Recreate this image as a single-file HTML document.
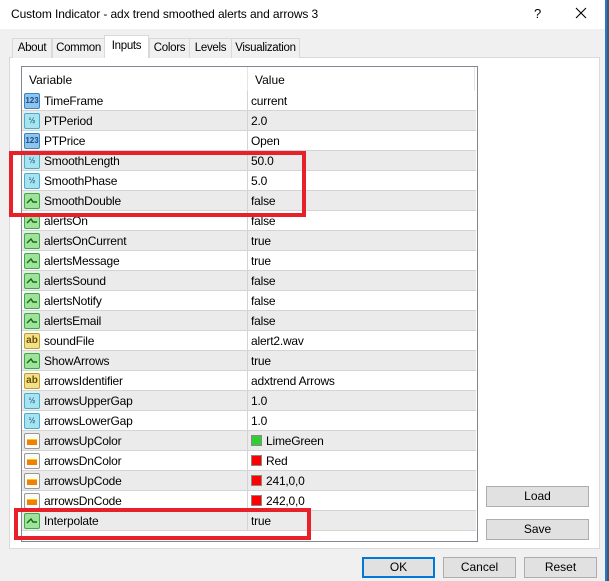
<!DOCTYPE html><html><head><style>
*{box-sizing:border-box;margin:0;padding:0}
body{width:609px;height:581px;overflow:hidden;background:#f0f0f0;font-family:"Liberation Sans",sans-serif;font-size:12px;color:#000;position:relative}
.a{position:absolute}
.title{left:0;top:0;width:606px;height:29px;background:#fff}
.tab{position:absolute;top:38px;height:20px;border:1px solid #d9d9d9;border-bottom:none;background:#f0f0f0;text-align:center;line-height:18px;font-size:11.5px;letter-spacing:-0.3px}
.row{position:absolute;left:22px;width:454px;height:20px;border-bottom:1px solid #d4d4d4}
.row.g{background:#ebebeb}
.row .n{position:absolute;left:22px;top:3px;letter-spacing:-0.2px}
.row .v{position:absolute;left:229px;top:3px;letter-spacing:-0.2px}
.row .d{position:absolute;left:225px;top:0;width:1px;height:19px;background:#d4d4d4}
.ic{position:absolute;left:2px;top:2px;width:16px;height:16px;border-radius:2px;font-size:8px;line-height:14px;text-align:center;font-weight:bold}
.i{background:#8fc4ec;border:1px solid #3a84c4;color:#1a4d8c}
.f{background:#a8e4ef;border:1px solid #4aaccc;color:#2a6c8c}
.b{background:#9fe39a;border:1px solid #3aa84a}
.s{background:#f2e08a;border:1px solid #b8a030;color:#6a5000;font-size:10px}
.c{background:#fafafa;border:1px solid #999}
.c::after{content:"";position:absolute;left:2px;top:5px;width:10px;height:5px;background:#f08000;border-top:1px solid #ffcc00}
.b svg{position:absolute;left:1px;top:2px}
.sw{display:inline-block;width:11px;height:11px;vertical-align:-1px;margin-right:4px;border:1px solid #888}
.btn{position:absolute;height:21px;border:1px solid #adadad;background:#e1e1e1;text-align:center;line-height:19px}
.red{position:absolute;border:4px solid #e8202a}
</style></head><body>
<div class="a title"></div>
<div class="a" style="left:11px;top:7px;font-size:12px;letter-spacing:-0.1px">Custom Indicator - adx trend smoothed alerts and arrows 3</div>
<div class="a" style="left:534px;top:6px;font-size:13px">?</div>
<svg class="a" style="left:575px;top:7px" width="12" height="12"><path d="M1 1L11 11M11 1L1 11" stroke="#000" stroke-width="1.1"/></svg>
<div class="a" style="left:605px;top:0;width:2px;height:581px;background:#1e7ad8"></div>
<div class="a" style="left:607px;top:0;width:2px;height:581px;background:#555"></div>
<div class="a" style="left:9px;top:57px;width:591px;height:492px;background:#fff;border:1px solid #d9d9d9"></div>
<div class="tab" style="left:12px;width:40px">About</div>
<div class="tab" style="left:52px;width:53px">Common</div>
<div class="tab" style="left:104px;width:45px;top:35px;height:23px;background:#fff;line-height:20px;z-index:2">Inputs</div>
<div class="tab" style="left:149px;width:41px">Colors</div>
<div class="tab" style="left:189px;width:43px">Levels</div>
<div class="tab" style="left:231px;width:69px">Visualization</div>
<div class="a" style="left:21px;top:66px;width:457px;height:476px;background:#fff;border:1px solid #828790"></div>
<div class="a" style="left:29px;top:73px">Variable</div>
<div class="a" style="left:255px;top:73px">Value</div>
<div class="a" style="left:247px;top:67px;width:1px;height:24px;background:#e5e5e5"></div>
<div class="a" style="left:474px;top:67px;width:1px;height:24px;background:#e5e5e5"></div>

<div class="row" style="top:91px"><div class="ic i">123</div><span class="n">TimeFrame</span><div class="d"></div><span class="v">current</span></div>
<div class="row g" style="top:111px"><div class="ic f">½</div><span class="n">PTPeriod</span><div class="d"></div><span class="v">2.0</span></div>
<div class="row" style="top:131px"><div class="ic i">123</div><span class="n">PTPrice</span><div class="d"></div><span class="v">Open</span></div>
<div class="row g" style="top:151px"><div class="ic f">½</div><span class="n">SmoothLength</span><div class="d"></div><span class="v">50.0</span></div>
<div class="row" style="top:171px"><div class="ic f">½</div><span class="n">SmoothPhase</span><div class="d"></div><span class="v">5.0</span></div>
<div class="row g" style="top:191px"><div class="ic b"><svg width="12" height="10"><path d="M1 7L5 3L7 6H11" stroke="#1a6a1a" fill="none" stroke-width="1.5"/></svg></div><span class="n">SmoothDouble</span><div class="d"></div><span class="v">false</span></div>
<div class="row" style="top:211px"><div class="ic b"><svg width="12" height="10"><path d="M1 7L5 3L7 6H11" stroke="#1a6a1a" fill="none" stroke-width="1.5"/></svg></div><span class="n">alertsOn</span><div class="d"></div><span class="v">false</span></div>
<div class="row g" style="top:231px"><div class="ic b"><svg width="12" height="10"><path d="M1 7L5 3L7 6H11" stroke="#1a6a1a" fill="none" stroke-width="1.5"/></svg></div><span class="n">alertsOnCurrent</span><div class="d"></div><span class="v">true</span></div>
<div class="row" style="top:251px"><div class="ic b"><svg width="12" height="10"><path d="M1 7L5 3L7 6H11" stroke="#1a6a1a" fill="none" stroke-width="1.5"/></svg></div><span class="n">alertsMessage</span><div class="d"></div><span class="v">true</span></div>
<div class="row g" style="top:271px"><div class="ic b"><svg width="12" height="10"><path d="M1 7L5 3L7 6H11" stroke="#1a6a1a" fill="none" stroke-width="1.5"/></svg></div><span class="n">alertsSound</span><div class="d"></div><span class="v">false</span></div>
<div class="row" style="top:291px"><div class="ic b"><svg width="12" height="10"><path d="M1 7L5 3L7 6H11" stroke="#1a6a1a" fill="none" stroke-width="1.5"/></svg></div><span class="n">alertsNotify</span><div class="d"></div><span class="v">false</span></div>
<div class="row g" style="top:311px"><div class="ic b"><svg width="12" height="10"><path d="M1 7L5 3L7 6H11" stroke="#1a6a1a" fill="none" stroke-width="1.5"/></svg></div><span class="n">alertsEmail</span><div class="d"></div><span class="v">false</span></div>
<div class="row" style="top:331px"><div class="ic s">ab</div><span class="n">soundFile</span><div class="d"></div><span class="v">alert2.wav</span></div>
<div class="row g" style="top:351px"><div class="ic b"><svg width="12" height="10"><path d="M1 7L5 3L7 6H11" stroke="#1a6a1a" fill="none" stroke-width="1.5"/></svg></div><span class="n">ShowArrows</span><div class="d"></div><span class="v">true</span></div>
<div class="row" style="top:371px"><div class="ic s">ab</div><span class="n">arrowsIdentifier</span><div class="d"></div><span class="v">adxtrend Arrows</span></div>
<div class="row g" style="top:391px"><div class="ic f">½</div><span class="n">arrowsUpperGap</span><div class="d"></div><span class="v">1.0</span></div>
<div class="row" style="top:411px"><div class="ic f">½</div><span class="n">arrowsLowerGap</span><div class="d"></div><span class="v">1.0</span></div>
<div class="row g" style="top:431px"><div class="ic c"></div><span class="n">arrowsUpColor</span><div class="d"></div><span class="v"><i class="sw" style="background:#32cd32"></i>LimeGreen</span></div>
<div class="row" style="top:451px"><div class="ic c"></div><span class="n">arrowsDnColor</span><div class="d"></div><span class="v"><i class="sw" style="background:#f00"></i>Red</span></div>
<div class="row g" style="top:471px"><div class="ic c"></div><span class="n">arrowsUpCode</span><div class="d"></div><span class="v"><i class="sw" style="background:#f00"></i>241,0,0</span></div>
<div class="row" style="top:491px"><div class="ic c"></div><span class="n">arrowsDnCode</span><div class="d"></div><span class="v"><i class="sw" style="background:#f00"></i>242,0,0</span></div>
<div class="row g" style="top:511px"><div class="ic b"><svg width="12" height="10"><path d="M1 7L5 3L7 6H11" stroke="#1a6a1a" fill="none" stroke-width="1.5"/></svg></div><span class="n">Interpolate</span><div class="d"></div><span class="v">true</span></div>

<div class="red" style="left:9px;top:151px;width:297px;height:66px"></div>
<div class="red" style="left:14px;top:508px;width:297px;height:32px"></div>

<div class="btn" style="left:486px;top:486px;width:103px">Load</div>
<div class="btn" style="left:486px;top:519px;width:103px">Save</div>
<div class="btn" style="left:362px;top:557px;width:73px;border:2px solid #0078d7;line-height:17px">OK</div>
<div class="btn" style="left:443px;top:557px;width:73px">Cancel</div>
<div class="btn" style="left:524px;top:557px;width:73px">Reset</div>
</body></html>
